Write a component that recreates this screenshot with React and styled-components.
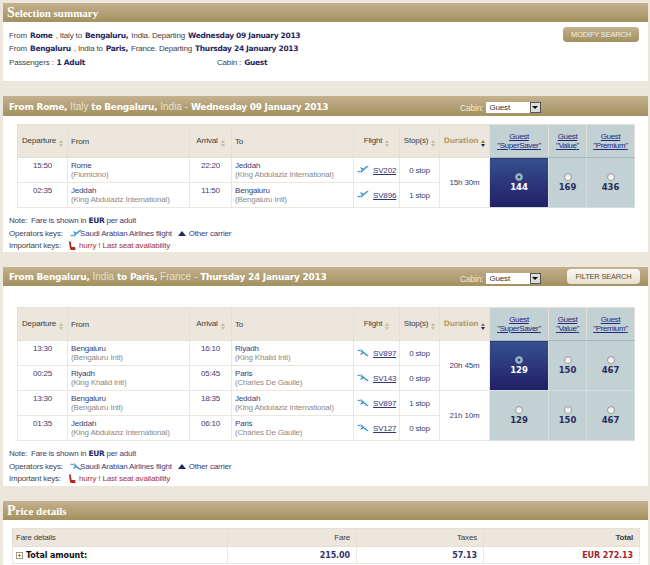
import React from "react";
import styled, { createGlobalStyle } from "styled-components";

const Global = createGlobalStyle`
html, body { margin: 0; padding: 0; height: 565px; overflow: hidden; background: #ece6dc; }
body { font-family: "Liberation Sans", Arial, sans-serif; font-size: 8px; letter-spacing: -0.18px; color: #33336b; }
`;

const Page = styled.div`
  width: 650px;
  padding: 3px 2px 0 3px;
  box-sizing: border-box;
`;
const Panel = styled.section`
  background: #fff;
  margin-bottom: 15px;
  height: ${(p) => p.$height}px;
`;
const PanelHeader = styled.div`
  height: ${(p) => p.$tall || 20}px;
  box-sizing: border-box;
  background: linear-gradient(#c4b18f, #a3905e);
  display: flex;
  align-items: center;
  padding-left: 6px;
  color: #fff;
  position: relative;
`;
const Title = styled.h2`
  margin: 0 0 0 -2px;
  font: bold 11px "Liberation Serif", "DejaVu Serif", serif;
  letter-spacing: 0;
  color: #fff;
  &::first-letter { font-size: 14px; }
`;
const RouteTitle = styled.h3`
  margin: 0;
  font: bold 9px "DejaVu Sans", sans-serif;
  letter-spacing: -0.25px;
  color: #fff;
  white-space: nowrap;
  span { font-weight: normal; color: #e8e0d0; font-family: "Liberation Sans", sans-serif; font-size: 10px; letter-spacing: 0; }
`;
const CabinBox = styled.div`
  position: absolute;
  left: 457px;
  top: 6px;
  display: flex;
  align-items: center;
  gap: 2px;
  font: 8.5px "Liberation Sans", sans-serif;
  color: #efe9dc;
`;
const FakeSelect = styled.div`
  width: 55px;
  height: 11px;
  background: #fff;
  display: flex;
  justify-content: space-between;
  color: #333;
  font: 8px/11px "Liberation Sans", sans-serif;
  padding-left: 4px;
  box-sizing: border-box;
`;
const SelectArrow = styled.div`
  width: 11px;
  height: 11px;
  background: #ddd;
  border: 1px solid #555;
  box-sizing: border-box;
  display: flex;
  align-items: center;
  justify-content: center;
  &::after {
    content: "";
    border: 3px solid transparent;
    border-top: 3px solid #000;
    border-bottom: 0;
  }
`;
const ActionButton = styled.button`
  position: absolute;
  left: ${(p) => p.$left}px;
  top: ${(p) => p.$top}px;
  width: ${(p) => p.$width}px;
  height: 15px;
  border: 0;
  border-radius: 4px;
  padding: 0;
  font: 7.5px "Liberation Sans", sans-serif;
  letter-spacing: -0.2px;
  background: ${(p) => (p.$light ? "linear-gradient(#fbf9f5,#e7dfd0)" : "linear-gradient(#c4b18f,#a3905e)")};
  color: ${(p) => (p.$light ? "#5a4f38" : "#f3eee3")};
`;
const SummaryBody = styled.div`
  position: relative;
  padding: 8px 0 0 6px;
`;
const SummaryLine = styled.p`
  margin: 0;
  height: 12.5px;
  line-height: 12.5px;
  font-size: 8px;
  color: #444;
  white-space: nowrap;
  b { font: bold 7.5px "DejaVu Sans", sans-serif; letter-spacing: -0.3px; color: #26265e; margin: 0 1px; }
`;
const PassengerRow = styled.div`
  display: flex;
  margin-top: 3px;
  font-size: 8px;
  color: #444;
  div { width: 208px; }
  b { font: bold 7.5px "DejaVu Sans", sans-serif; letter-spacing: -0.3px; color: #26265e; margin-left: 1px; }
`;
const FlightTable = styled.table`
  border-collapse: collapse;
  table-layout: fixed;
  width: 617px;
  margin: ${(p) => p.$top}px 0 0 14px;
  font-size: 8px;
`;
const Th = styled.th`
  background: ${(p) => (p.$fare ? "#c2d1d3" : "#ece6dc")};
  border: 1px solid #e6dfd2;
  border-bottom-color: ${(p) => (p.$fare ? "#a9b8ba" : "#e6dfd2")};
  height: 32px;
  padding: 0 3px;
  font-weight: normal;
  text-align: ${(p) => (p.$left ? "left" : "center")};
  color: #3d3d3d;
  white-space: nowrap;
  line-height: 9px;
  a { color: #27277a; text-decoration: underline; letter-spacing: -0.35px; }
`;
const SortLabel = styled.span`
  color: ${(p) => (p.$active ? "#b8a06b" : "inherit")};
  font-weight: ${(p) => (p.$active ? "bold" : "normal")};
  font-family: ${(p) => (p.$active ? '"DejaVu Sans", sans-serif' : "inherit")};
  font-size: ${(p) => (p.$active ? "7.5px" : "inherit")};
  letter-spacing: ${(p) => (p.$active ? "-0.3px" : "inherit")};
`;
const SortArrows = styled.span`
  display: inline-flex;
  flex-direction: column;
  gap: 1px;
  margin-left: 3px;
  vertical-align: 0;
  &::before, &::after {
    content: "";
    border-left: 2.5px solid transparent;
    border-right: 2.5px solid transparent;
  }
  &::before { border-bottom: 3px solid ${(p) => (p.$active ? "#8f7a3f" : "#c9bc9c")}; }
  &::after { border-top: 3px solid ${(p) => (p.$active ? "#222266" : "#c9bc9c")}; }
`;
const Td = styled.td`
  box-sizing: border-box;
  border: 1px solid #ece6dc;
  border-bottom: ${(p) => (p.$dashed ? "1px dashed #d9d0bd" : "1px solid #ece6dc")};
  height: 25px;
  padding: ${(p) => (p.$top ? "3px 3px 0" : "0 3px")};
  vertical-align: ${(p) => (p.$top ? "top" : "middle")};
  text-align: ${(p) => (p.$left ? "left" : "center")};
  color: #3c3c72;
  line-height: 9px;
  white-space: nowrap;
  small { font-size: 8px; color: #8a8a8a; }
`;
const FlightLink = styled.a`
  color: #33337a;
  text-decoration: underline;
  margin-left: 2px;
`;
const FareCell = styled.td`
  border: 1px solid #d6dfdf;
  background: ${(p) => (p.$selected ? "linear-gradient(#35508f,#221f66)" : "#c2d1d3")};
  color: ${(p) => (p.$selected ? "#fff" : "#2a2a5c")};
  text-align: center;
  font: bold 8.5px "DejaVu Sans", sans-serif;
  letter-spacing: 0;
  padding: 0;
`;
const Radio = styled.span`
  display: block;
  width: 8px;
  height: 8px;
  margin: -1px auto 1px;
  border-radius: 50%;
  box-sizing: border-box;
  border: 1px solid #999;
  background: ${(p) => (p.$on ? "radial-gradient(circle,#1d3f70 30%,#8fc3d3 40%)" : "linear-gradient(#e4e4e4,#fff)")};
`;
const Notes = styled.div`
  margin: 7px 0 0 6px;
  font-size: 8px;
  color: #444;
`;
const NoteRow = styled.div`
  height: 12.5px;
  line-height: 12.5px;
  display: flex;
  align-items: center;
  white-space: nowrap;
  b { font-family: "DejaVu Sans", sans-serif; font-size: 7.5px; letter-spacing: -0.3px; color: #26265e; margin: 0 2px; }
  svg { margin-right: -2px; }
`;
const NoteLabel = styled.span`
  width: ${(p) => p.$width || 60}px;
  color: #444;
  flex: none;
`;
const KeyText = styled.span`
  color: ${(p) => p.$color || "#3c3c72"};
`;
const PriceTable = styled.table`
  border-collapse: collapse;
  table-layout: fixed;
  width: 627px;
  margin: 8px 0 0 9px;
  font-size: 8px;
`;
const PriceTh = styled.th`
  background: #ece6dc;
  border: 1px solid #e6dfd2;
  height: 17px;
  padding: 0 6px 0 3px;
  font-weight: ${(p) => (p.$strong ? "bold" : "normal")};
  color: #3d3d3d;
  text-align: ${(p) => (p.$left ? "left" : "right")};
`;
const PriceTd = styled.td`
  border: 1px solid #ece6dc;
  height: 16px;
  padding: 0 6px 0 3px;
  text-align: ${(p) => (p.$left ? "left" : "right")};
  font: bold 8px "DejaVu Sans", sans-serif;
  letter-spacing: -0.1px;
  color: ${(p) => p.$color || "#33336b"};
`;
const Expander = styled.span`
  display: inline-block;
  width: 7px;
  height: 7px;
  border: 1px solid #a89a78;
  box-sizing: border-box;
  margin-right: 3px;
  vertical-align: -1px;
  background:
    linear-gradient(#8a7b55, #8a7b55) center / 3px 1px no-repeat,
    linear-gradient(#8a7b55, #8a7b55) center / 1px 3px no-repeat;
`;
const TriangleIcon = styled.span`
  display: inline-block;
  margin-left: 6px;
  margin-right: 3px;
  border-left: 4px solid transparent;
  border-right: 4px solid transparent;
  border-bottom: 5px solid #1f2a6b;
`;

const Plane = ({ down }) => (
  <svg width="12" height="9" viewBox="0 0 12 9" style={{ verticalAlign: "-1px", transform: down ? "scaleY(-1)" : "none", flex: "none" }}>
    <path d="M0 6.5 L4 5.5 L9 1.5 Q11 0.5 11.5 1 Q11.5 2 9.5 3 L6 6 L4 8 L3.5 8 L4.5 6 L1.5 7.5 Z" fill="#3d9bd8" />
    <path d="M5 4.5 L3 2.5 L4 2.5 L6.5 4 Z" fill="#27508f" />
  </svg>
);

const Seat = () => (
  <svg width="8" height="10" viewBox="0 0 9 10" style={{ marginRight: 3, flex: "none" }}>
    <path d="M1 0 L3 0 L4 6 L8 6 L8.5 9.5 L3 9.5 L2 7 Z" fill="#b5271f" />
  </svg>
);

const Sortable = ({ label, active, left }) => (
  <Th $left={left}>
    <SortLabel $active={active}>{label}</SortLabel>
    <SortArrows $active={active} />
  </Th>
);

const FareHead = ({ name }) => (
  <Th $fare>
    <a href="#">Guest<br />"{name}"</a>
  </Th>
);

const Fare = ({ value, selected, rows }) => (
  <FareCell rowSpan={rows} $selected={selected}>
    <Radio $on={selected} />
    {value}
  </FareCell>
);

const Leg = ({ dep, from, fromSub, arr, to, toSub, flight, stop, dashed, down, extra }) => (
  <tr>
    <Td $top $dashed={dashed}>{dep}</Td>
    <Td $left>{from}<br /><small>({fromSub})</small></Td>
    <Td $top $dashed={dashed}>{arr}</Td>
    <Td $left>{to}<br /><small>({toSub})</small></Td>
    <Td><Plane down={down} /> <FlightLink href="#">{flight}</FlightLink></Td>
    <Td $dashed={dashed}>{stop}</Td>
    {extra}
  </tr>
);

const Options = ({ pair, down, duration, fares, selected }) => (
  <>
    <Leg {...pair[0]} dashed down={down} extra={
      <>
        <Td rowSpan={2}>{duration}</Td>
        {fares.map((f, i) => <Fare key={i} value={f} rows={2} selected={selected && i === 0} />)}
      </>
    } />
    <Leg {...pair[1]} down={down} />
  </>
);

const FlightGrid = ({ top, children }) => (
  <FlightTable $top={top}>
    <colgroup>
      {[50, 122, 42, 122, 46, 40, 50, 59, 38, 48].map((w, i) => <col key={i} width={w} />)}
    </colgroup>
    <thead>
      <tr>
        <Sortable label="Departure" />
        <Th $left>From</Th>
        <Sortable label="Arrival" />
        <Th $left>To</Th>
        <Sortable label="Flight" />
        <Sortable label="Stop(s)" />
        <Sortable label="Duration" active />
        <FareHead name="SuperSaver" />
        <FareHead name="Value" />
        <FareHead name="Premium" />
      </tr>
    </thead>
    <tbody>{children}</tbody>
  </FlightTable>
);

const FlightNotes = ({ down }) => (
  <Notes>
    <NoteRow><NoteLabel $width={22}>Note:</NoteLabel><KeyText>Fare is shown in</KeyText> <b>EUR</b> <KeyText>per adult</KeyText></NoteRow>
    <NoteRow>
      <NoteLabel $width={61}>Operators keys:</NoteLabel>
      <Plane down={down} />
      <KeyText>Saudi Arabian Airlines flight</KeyText>
      <TriangleIcon />
      <KeyText>Other carrier</KeyText>
    </NoteRow>
    <NoteRow>
      <NoteLabel $width={59}>Important keys:</NoteLabel>
      <Seat />
      <KeyText $color="#a8323a">hurry ! Last seat availability</KeyText>
    </NoteRow>
  </Notes>
);

const Cabin = () => (
  <CabinBox>
    Cabin:
    <FakeSelect>Guest<SelectArrow /></FakeSelect>
  </CabinBox>
);

export default function App() {
  return (
    <Page>
      <Global />
      <Panel $height={78}>
        <PanelHeader $tall={19}><Title>Selection summary</Title></PanelHeader>
        <SummaryBody>
          <ActionButton $left={560} $top={5} $width={76}>MODIFY SEARCH</ActionButton>
          <SummaryLine>From <b>Rome</b> , Italy to <b>Bengaluru,</b> India. Departing <b>Wednesday 09 January 2013</b></SummaryLine>
          <SummaryLine>From <b>Bengaluru</b> , India to <b>Paris,</b> France. Departing <b>Thursday 24 January 2013</b></SummaryLine>
          <PassengerRow>
            <div>Passengers : <b>1 Adult</b></div>
            <div>Cabin : <b>Guest</b></div>
          </PassengerRow>
        </SummaryBody>
      </Panel>

      <Panel $height={156}>
        <PanelHeader>
          <RouteTitle>From Rome, <span>Italy</span> to Bengaluru, <span>India -</span> Wednesday 09 January 2013</RouteTitle>
          <Cabin />
        </PanelHeader>
        <FlightGrid top={8}>
          <Options
            duration="15h 30m"
            fares={["144", "169", "436"]}
            selected
            pair={[
              { dep: "15:50", from: "Rome", fromSub: "Fiumicino", arr: "22:20", to: "Jeddah", toSub: "King Abdulaziz International", flight: "SV202", stop: "0 stop" },
              { dep: "02:35", from: "Jeddah", fromSub: "King Abdulaziz International", arr: "11:50", to: "Bengaluru", toSub: "Bengaluru Intl", flight: "SV896", stop: "1 stop" },
            ]}
          />
        </FlightGrid>
        <FlightNotes />
      </Panel>

      <Panel $height={219}>
        <PanelHeader $tall={19}>
          <RouteTitle>From Bengaluru, <span>India</span> to Paris, <span>France -</span> Thursday 24 January 2013</RouteTitle>
          <Cabin />
          <ActionButton $left={564} $top={2} $width={73} $light>FILTER SEARCH</ActionButton>
        </PanelHeader>
        <FlightGrid top={21}>
          <Options
            down
            duration="20h 45m"
            fares={["129", "150", "467"]}
            selected
            pair={[
              { dep: "13:30", from: "Bengaluru", fromSub: "Bengaluru Intl", arr: "16:10", to: "Riyadh", toSub: "King Khalid Intl", flight: "SV897", stop: "0 stop" },
              { dep: "00:25", from: "Riyadh", fromSub: "King Khalid Intl", arr: "05:45", to: "Paris", toSub: "Charles De Gaulle", flight: "SV143", stop: "0 stop" },
            ]}
          />
          <Options
            down
            duration="21h 10m"
            fares={["129", "150", "467"]}
            pair={[
              { dep: "13:30", from: "Bengaluru", fromSub: "Bengaluru Intl", arr: "18:35", to: "Jeddah", toSub: "King Abdulaziz International", flight: "SV897", stop: "1 stop" },
              { dep: "01:35", from: "Jeddah", fromSub: "King Abdulaziz International", arr: "06:10", to: "Paris", toSub: "Charles De Gaulle", flight: "SV127", stop: "0 stop" },
            ]}
          />
        </FlightGrid>
        <FlightNotes down />
      </Panel>

      <Panel $height={64}>
        <PanelHeader $tall={19}><Title>Price details</Title></PanelHeader>
        <PriceTable>
          <colgroup>
            {[215, 129, 127, 156].map((w, i) => <col key={i} width={w} />)}
          </colgroup>
          <thead>
            <tr>
              <PriceTh $left>Fare details</PriceTh>
              <PriceTh>Fare</PriceTh>
              <PriceTh>Taxes</PriceTh>
              <PriceTh $strong>Total</PriceTh>
            </tr>
          </thead>
          <tbody>
            <tr>
              <PriceTd $left $color="#111"><Expander />Total amount:</PriceTd>
              <PriceTd>215.00</PriceTd>
              <PriceTd>57.13</PriceTd>
              <PriceTd $color="#a5232b">EUR 272.13</PriceTd>
            </tr>
          </tbody>
        </PriceTable>
      </Panel>
    </Page>
  );
}
